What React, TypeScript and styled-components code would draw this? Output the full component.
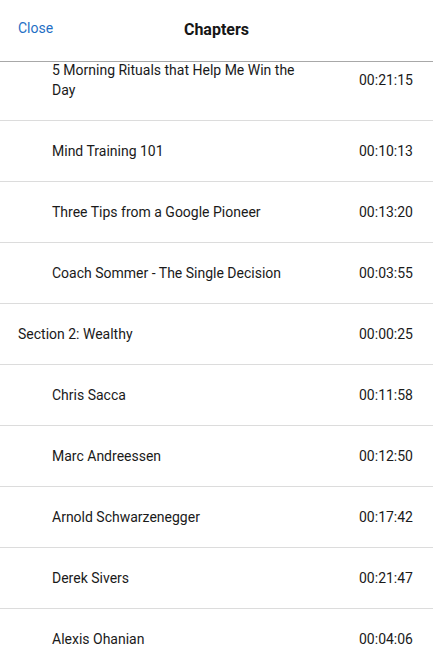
import React, { useEffect, useRef } from "react";
import styled, { createGlobalStyle } from "styled-components";

const Global = createGlobalStyle`
  html, body { margin: 0; padding: 0; background: #fff; }
  body { font-family: Roboto, "Noto Sans", Arial, sans-serif; color: #1f1f1f; }
  * { box-sizing: border-box; }
`;

const Page = styled.div`
  height: 669px;
  display: flex;
  flex-direction: column;
  background: #fff;
`;

const Header = styled.header`
  height: 62px;
  flex: none;
  display: grid;
  grid-template-columns: 1fr auto 1fr;
  align-items: center;
  padding: 0 18px 2px;
  border-bottom: 1px solid #a8a8a8;
`;

const CloseButton = styled.button`
  justify-self: start;
  border: none;
  background: none;
  padding: 0;
  margin-top: -3px;
  font-family: inherit;
  font-size: 14px;
  color: #1f6fc5;
  cursor: pointer;
`;

const Title = styled.h1`
  margin: 0;
  font-size: 16px;
  font-weight: 700;
  color: #161616;
`;

const List = styled.div`
  flex: 1;
  overflow-y: auto;
  scrollbar-width: none;
  &::-webkit-scrollbar { display: none; }
`;

const Row = styled.div<{ $indent: boolean }>`
  display: flex;
  align-items: center;
  justify-content: space-between;
  padding: 20px 20px 20px ${(p) => (p.$indent ? 52 : 18)}px;
  border-bottom: 1px solid #dcdcdc;
  font-size: 14px;
  line-height: 20px;
  color: #1a1a1a;
`;

const Name = styled.span`
  max-width: 250px;
`;

const Time = styled.span`
  flex: none;
  font-variant-numeric: tabular-nums;
`;

const chapters = [
  { title: "5 Morning Rituals that Help Me Win the Day", time: "00:21:15", indent: true },
  { title: "Mind Training 101", time: "00:10:13", indent: true },
  { title: "Three Tips from a Google Pioneer", time: "00:13:20", indent: true },
  { title: "Coach Sommer - The Single Decision", time: "00:03:55", indent: true },
  { title: "Section 2: Wealthy", time: "00:00:25", indent: false },
  { title: "Chris Sacca", time: "00:11:58", indent: true },
  { title: "Marc Andreessen", time: "00:12:50", indent: true },
  { title: "Arnold Schwarzenegger", time: "00:17:42", indent: true },
  { title: "Derek Sivers", time: "00:21:47", indent: true },
  { title: "Alexis Ohanian", time: "00:04:06", indent: true },
];

export default function App() {
  const listRef = useRef<HTMLDivElement>(null);
  useEffect(() => {
    if (listRef.current) listRef.current.scrollTop = 22;
  }, []);
  return (
    <Page>
      <Global />
      <Header>
        <CloseButton>Close</CloseButton>
        <Title>Chapters</Title>
        <span />
      </Header>
      <List ref={listRef}>
        {chapters.map((c) => (
          <Row key={c.title} $indent={c.indent}>
            <Name>{c.title}</Name>
            <Time>{c.time}</Time>
          </Row>
        ))}
      </List>
    </Page>
  );
}
